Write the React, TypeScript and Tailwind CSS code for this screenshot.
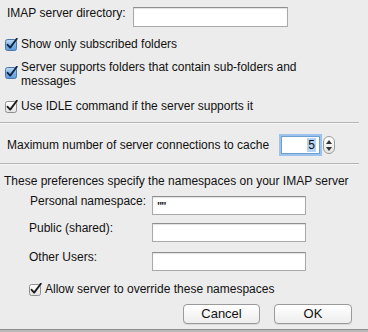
import React from "react";

const font = "font-['Liberation_Sans','Arial',sans-serif]";

const CheckBox = ({ blue }: { blue?: boolean }) => (
  <svg width="13" height="13" viewBox="0 0 13 13" className="shrink-0">
    <defs>
      <linearGradient id="cbBlue" x1="0" y1="0" x2="0" y2="1">
        <stop offset="0" stopColor="#c4ddf5" />
        <stop offset="0.5" stopColor="#7fb3e6" />
        <stop offset="1" stopColor="#5d9bdb" />
      </linearGradient>
      <linearGradient id="cbGray" x1="0" y1="0" x2="0" y2="1">
        <stop offset="0" stopColor="#ffffff" />
        <stop offset="1" stopColor="#e2e2e2" />
      </linearGradient>
    </defs>
    <rect
      x="0.5"
      y="1.5"
      width="11"
      height="11"
      rx="2"
      fill={blue ? "url(#cbBlue)" : "url(#cbGray)"}
      stroke={blue ? "#4a76a8" : "#8e8e8e"}
    />
    <path
      d="M2.6 6.8 L5.2 9.6 L11.8 0.8"
      fill="none"
      stroke={blue ? "#0f2540" : "#1c1c1c"}
      strokeWidth="1.9"
      strokeLinecap="round"
      strokeLinejoin="round"
    />
  </svg>
);

const TextBox = ({ className, value }: { className: string; value?: string }) => (
  <div
    className={`bg-white border border-[#a9a9a9] border-t-[#8f8f8f] shadow-[inset_0_1px_1px_rgba(0,0,0,0.12)] text-[11px] leading-none pl-[4px] pt-[4px] ${className}`}
  >
    {value}
  </div>
);

const Separator = () => <div className="w-[359px] h-px bg-[#b5b5b5] border-b border-[#f6f6f6] box-content" />;

const Button = ({ label, className }: { label: string; className: string }) => (
  <div
    className={`h-[20px] rounded-[4px] border border-[#9a9a9a] bg-gradient-to-b from-white to-[#ededed] shadow-[0_1px_0_rgba(0,0,0,0.08)] flex items-center justify-center text-[13px] text-[#111] ${className}`}
  >
    {label}
  </div>
);

const Stepper = () => (
  <div className="w-[12px] h-[18px] rounded-[6px] border border-[#9b9b9b] bg-gradient-to-b from-white to-[#e4e4e4] flex flex-col items-center justify-center gap-[3px]">
    <svg width="6" height="4" viewBox="0 0 6 4">
      <path d="M0 4 L3 0 L6 4 Z" fill="#333" />
    </svg>
    <svg width="6" height="4" viewBox="0 0 6 4">
      <path d="M0 0 L3 4 L6 0 Z" fill="#333" />
    </svg>
  </div>
);

export default function App() {
  return (
    <div className={`w-[368px] h-[332px] bg-[#ececec] text-[12px] text-[#111] whitespace-nowrap flex flex-col overflow-hidden ${font}`}>
      {/* IMAP directory */}
      <div className="flex items-start pt-[7px] pl-[7px]">
        <span className="w-[126px] leading-[12px]">IMAP server directory:</span>
        <TextBox className="w-[155px] h-[20px]" />
      </div>

      {/* checkboxes */}
      <div className="flex items-center gap-[3px] pl-[5px] mt-[10px] h-[14px]">
        <CheckBox blue />
        <span>Show only subscribed folders</span>
      </div>
      <div className="flex items-start gap-[3px] pl-[5px] mt-[9px]">
        <div className="pt-[6px]">
          <CheckBox blue />
        </div>
        <span className="leading-[14px] whitespace-normal w-[300px]">
          Server supports folders that contain sub-folders and messages
        </span>
      </div>
      <div className="flex items-center gap-[3px] pl-[5px] mt-[11px] h-[14px]">
        <CheckBox />
        <span>Use IDLE command if the server supports it</span>
      </div>

      <div className="mt-[9px]">
        <Separator />
      </div>

      {/* connections */}
      <div className="flex items-center h-[18px] mt-[12px] pl-[7px]">
        <span className="w-[274px]">Maximum number of server connections to cache</span>
        <div className="w-[39px] h-[18px] bg-white border border-[#6e9fd3] shadow-[0_0_0_2px_#9cc3ec] flex items-center justify-end pr-[3px] text-[12px]">
          <span className="bg-[#b5d4f5] px-[1px] leading-[14px]">5</span>
        </div>
        <div className="ml-[3px]">
          <Stepper />
        </div>
      </div>

      <div className="mt-[9px]">
        <Separator />
      </div>

      {/* namespaces */}
      <div className="pl-[4px] mt-[9px] leading-[14px]">
        These preferences specify the namespaces on your IMAP server
      </div>
      <div className="flex items-start pl-[30px] mt-[8px] h-[19px]">
        <span className="w-[122px] leading-[10px]">Personal namespace:</span>
        <TextBox className="w-[154px] h-[19px] text-[9px] font-bold tracking-[-1px] pt-[2px] text-[#222]" value={'""'} />
      </div>
      <div className="flex items-start pl-[29px] mt-[8px] h-[19px]">
        <span className="w-[123px] leading-[10px]">Public (shared):</span>
        <TextBox className="w-[154px] h-[19px]" />
      </div>
      <div className="flex items-start pl-[29px] mt-[10px] h-[19px]">
        <span className="w-[123px] leading-[10px]">Other Users:</span>
        <TextBox className="w-[154px] h-[19px]" />
      </div>
      <div className="flex items-center gap-[3px] pl-[29px] mt-[11px] h-[14px]">
        <CheckBox />
        <span>Allow server to override these namespaces</span>
      </div>

      {/* buttons */}
      <div className="flex pl-[183px] gap-[14px] mt-[8px]">
        <Button label="Cancel" className="w-[77px]" />
        <Button label="OK" className="w-[78px]" />
      </div>

      <div className="mt-auto h-[3px] border-t border-[#8d8d8d] bg-[#b9b9b9]" />
    </div>
  );
}
